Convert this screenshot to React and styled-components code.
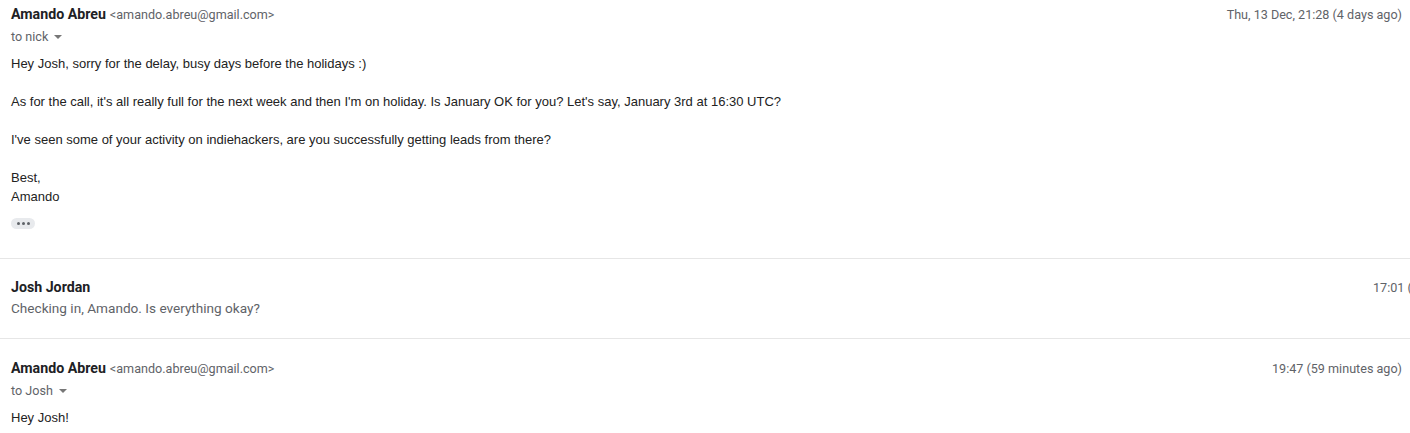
import React from "react";
import styled, { createGlobalStyle } from "styled-components";

const GlobalStyle = createGlobalStyle`
  html, body {
    margin: 0;
    padding: 0;
    background: #fff;
    overflow: hidden;
  }
  body {
    font-family: Roboto, "Liberation Sans", Arial, sans-serif;
  }
`;

const Thread = styled.div`
  width: 1410px;
  display: flex;
  flex-direction: column;
`;

const Message = styled.div`
  padding: ${(p) => p.$top}px 8px ${(p) => p.$bottom}px 11px;
  border-top: ${(p) => (p.$first ? "none" : "1px solid #e6e6e6")};
`;

const HeaderRow = styled.div`
  display: flex;
  justify-content: space-between;
  align-items: center;
  height: 20px;
`;

const Sender = styled.div`
  display: flex;
  align-items: baseline;
  gap: 4px;
  white-space: nowrap;
`;

const Name = styled.span`
  font-size: 14.2px;
  font-weight: 700;
  color: #202124;
`;

const Email = styled.span`
  font-size: 12.6px;
  color: #5f6368;
`;

const Time = styled.div`
  font-size: 12.6px;
  color: #5f6368;
  white-space: nowrap;
`;

const ClippedTime = styled(Time)`
  width: 37px;
  margin-right: -8px;
  overflow: hidden;
`;

const ToRow = styled.div`
  display: flex;
  align-items: center;
  gap: 6px;
  height: 20px;
  margin-top: 2px;
  font-size: 12.6px;
  color: #5f6368;
`;

const Caret = styled.span`
  width: 0;
  height: 0;
  border-left: 4px solid transparent;
  border-right: 4px solid transparent;
  border-top: 4px solid #777;
  margin-top: 1px;
`;

const Body = styled.div`
  margin-top: 8px;
  font-family: "Liberation Sans", Arial, sans-serif;
  font-size: 13px;
  line-height: 19px;
  color: #222;
`;

const Para = styled.p`
  margin: 0 0 19px;
  &:last-child {
    margin-bottom: 0;
  }
`;

const MoreButton = styled.div`
  margin-top: 12px;
  width: 24px;
  height: 11px;
  border-radius: 6px;
  background: #e8eaed;
  display: flex;
  align-items: center;
  justify-content: center;
  gap: 2px;
`;

const Dot = styled.span`
  width: 3px;
  height: 3px;
  border-radius: 50%;
  background: #5f6368;
`;

const Snippet = styled.div`
  margin-top: 1px;
  font-size: 13.6px;
  line-height: 20px;
  color: #5f6368;
`;

export default function App() {
  return (
    <>
      <GlobalStyle />
      <Thread>
        <Message $first $top={4} $bottom={29}>
          <HeaderRow>
            <Sender>
              <Name>Amando Abreu</Name>
              <Email>&lt;amando.abreu@gmail.com&gt;</Email>
            </Sender>
            <Time>Thu, 13 Dec, 21:28 (4 days ago)</Time>
          </HeaderRow>
          <ToRow>
            to nick <Caret />
          </ToRow>
          <Body>
            <Para>Hey Josh, sorry for the delay, busy days before the holidays :)</Para>
            <Para>
              As for the call, it's all really full for the next week and then I'm on holiday. Is
              January OK for you? Let's say, January 3rd at 16:30 UTC?
            </Para>
            <Para>
              I've seen some of your activity on indiehackers, are you successfully getting leads
              from there?
            </Para>
            <Para>
              Best,
              <br />
              Amando
            </Para>
          </Body>
          <MoreButton>
            <Dot />
            <Dot />
            <Dot />
          </MoreButton>
        </Message>

        <Message $top={18} $bottom={20}>
          <HeaderRow>
            <Sender>
              <Name>Josh Jordan</Name>
            </Sender>
            <ClippedTime>17:01 (2 hours ago)</ClippedTime>
          </HeaderRow>
          <Snippet>Checking in, Amando. Is everything okay?</Snippet>
        </Message>

        <Message $top={19} $bottom={20}>
          <HeaderRow>
            <Sender>
              <Name>Amando Abreu</Name>
              <Email>&lt;amando.abreu@gmail.com&gt;</Email>
            </Sender>
            <Time>19:47 (59 minutes ago)</Time>
          </HeaderRow>
          <ToRow>
            to Josh <Caret />
          </ToRow>
          <Body>
            <Para>Hey Josh!</Para>
          </Body>
        </Message>
      </Thread>
    </>
  );
}
